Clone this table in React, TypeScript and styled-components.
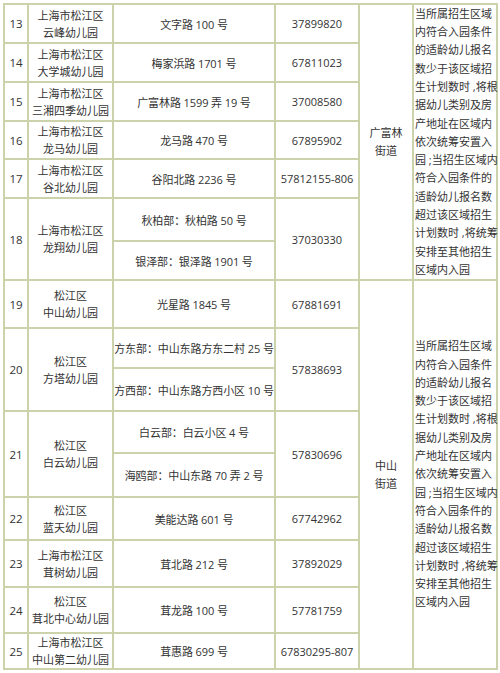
import React from 'react';
import styled, { createGlobalStyle } from 'styled-components';

type School = {
  num: number;
  name: [string, string];
  addr: string[];
  phone: string;
  heights: number[];
};

const schools: School[] = [
  { num: 13, name: ['上海市松江区', '云峰幼儿园'], addr: ['文字路 100 号'], phone: '37899820', heights: [39] },
  { num: 14, name: ['上海市松江区', '大学城幼儿园'], addr: ['梅家浜路 1701 号'], phone: '67811023', heights: [39] },
  { num: 15, name: ['上海市松江区', '三湘四季幼儿园'], addr: ['广富林路 1599 弄 19 号'], phone: '37008580', heights: [39] },
  { num: 16, name: ['上海市松江区', '龙马幼儿园'], addr: ['龙马路 470 号'], phone: '67895902', heights: [38] },
  { num: 17, name: ['上海市松江区', '谷北幼儿园'], addr: ['谷阳北路 2236 号'], phone: '57812155-806', heights: [39] },
  { num: 18, name: ['上海市松江区', '龙翔幼儿园'], addr: ['秋柏部：秋柏路 50 号', '银泽部：银泽路 1901 号'], phone: '37030330', heights: [43, 39] },
  { num: 19, name: ['松江区', '中山幼儿园'], addr: ['光星路 1845 号'], phone: '67881691', heights: [48] },
  { num: 20, name: ['松江区', '方塔幼儿园'], addr: ['方东部：中山东路方东二村 25 号', '方西部：中山东路方西小区 10 号'], phone: '57838693', heights: [40, 43] },
  { num: 21, name: ['松江区', '白云幼儿园'], addr: ['白云部：白云小区 4 号', '海鸥部：中山东路 70 弄 2 号'], phone: '57830696', heights: [42, 44] },
  { num: 22, name: ['松江区', '蓝天幼儿园'], addr: ['美能达路 601 号'], phone: '67742962', heights: [43] },
  { num: 23, name: ['上海市松江区', '茸树幼儿园'], addr: ['茸北路 212 号'], phone: '37892029', heights: [47] },
  { num: 24, name: ['松江区', '茸北中心幼儿园'], addr: ['茸龙路 100 号'], phone: '57781759', heights: [46] },
  { num: 25, name: ['上海市松江区', '中山第二幼儿园'], addr: ['茸惠路 699 号'], phone: '67830295-807', heights: [36] },
];

const noteLines = [
  '当所属招生区域',
  '内符合入园条件',
  '的适龄幼儿报名',
  '数少于该区域招',
  '生计划数时 ,将根',
  '据幼儿类别及房',
  '产地址在区域内',
  '依次统筹安置入',
  '园 ;当招生区域内',
  '符合入园条件的',
  '适龄幼儿报名数',
  '超过该区域招生',
  '计划数时 ,将统筹',
  '安排至其他招生',
  '区域内入园',
];

const streets = [
  { name: ['广富林', '街道'], from: 13, to: 18 },
  { name: ['中山', '街道'], from: 19, to: 25 },
];

const trackHeights = schools.flatMap((s) => s.heights);

const startRows: Record<number, number> = {};
{
  let r = 1;
  schools.forEach((s) => {
    startRows[s.num] = r;
    r += s.heights.length;
  });
}

const LINE = '#ccd3aa';

const Global = createGlobalStyle`
  html, body { margin: 0; padding: 0; background: #ffffff; }
  body {
    font-family: "Open Sans", "Noto Sans CJK SC", sans-serif;
    color: #333333;
  }
`;

const Page = styled.div`
  padding: 3px 0 0 3px;
`;

const Grid = styled.div<{ $rows: string }>`
  display: grid;
  grid-template-columns: 24px 85px 162px 84px 54px 84px;
  grid-template-rows: ${(p) => p.$rows};
  width: 495px;
  box-sizing: border-box;
  border-top: 2px solid ${LINE};
  border-left: 2px solid ${LINE};
  font-size: 11px;
`;

const Cell = styled.div<{ $r: number; $rs?: number; $c: number }>`
  grid-row: ${(p) => p.$r} / span ${(p) => p.$rs ?? 1};
  grid-column: ${(p) => p.$c};
  box-sizing: border-box;
  border-right: 2px solid ${LINE};
  border-bottom: 2px solid ${LINE};
  display: flex;
  align-items: center;
  justify-content: center;
  text-align: center;
  white-space: nowrap;
  min-width: 0;
`;

const NumCell = styled(Cell)`
  font-size: 11.5px;
`;

const NameCell = styled(Cell)`
  flex-direction: column;
  line-height: 17px;
`;

const AddrCell = styled(Cell)`
  letter-spacing: -0.1px;
`;

const PhoneCell = styled(Cell)`
  font-size: 11px;
`;

const StreetCell = styled(Cell)`
  flex-direction: column;
  line-height: 18px;
`;

const NoteCell = styled(Cell)`
  justify-content: flex-start;
  text-align: left;
  padding-left: 1px;
`;

const NoteText = styled.div`
  line-height: 18.3px;
`;

const Line = styled.span`
  display: block;
`;

export default function App() {
  return (
    <>
      <Global />
      <Page>
        <Grid $rows={trackHeights.map((h) => `${h}px`).join(' ')}>
          {schools.map((s) => {
            const r = startRows[s.num];
            const span = s.heights.length;
            return (
              <React.Fragment key={s.num}>
                <NumCell $r={r} $rs={span} $c={1}>{s.num}</NumCell>
                <NameCell $r={r} $rs={span} $c={2}>
                  <Line>{s.name[0]}</Line>
                  <Line>{s.name[1]}</Line>
                </NameCell>
                {s.addr.map((a, i) => (
                  <AddrCell key={a} $r={r + i} $c={3}>{a}</AddrCell>
                ))}
                <PhoneCell $r={r} $rs={span} $c={4}>{s.phone}</PhoneCell>
              </React.Fragment>
            );
          })}
          {streets.map((g) => {
            const r = startRows[g.from];
            const end = startRows[g.to] + schools.find((s) => s.num === g.to)!.heights.length;
            return (
              <React.Fragment key={g.name[0]}>
                <StreetCell $r={r} $rs={end - r} $c={5}>
                  <Line>{g.name[0]}</Line>
                  <Line>{g.name[1]}</Line>
                </StreetCell>
                <NoteCell $r={r} $rs={end - r} $c={6}>
                  <NoteText>
                    {noteLines.map((l) => (
                      <Line key={l}>{l}</Line>
                    ))}
                  </NoteText>
                </NoteCell>
              </React.Fragment>
            );
          })}
        </Grid>
      </Page>
    </>
  );
}
